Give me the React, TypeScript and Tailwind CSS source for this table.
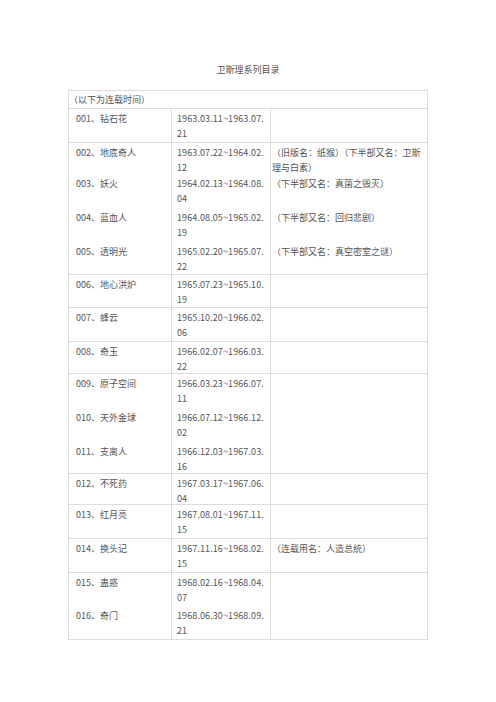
const rows = [
  { name: "001、钻石花", date: ["1963.03.11~1963.07.", "21"], note: [], h: "h-[34px]", line: true },
  { name: "002、地底奇人", date: ["1963.07.22~1964.02.", "12"], note: ["（旧版名：纸猴）（下半部又名：卫斯", "理与白素）"], h: "h-[31px]", line: false },
  { name: "003、妖火", date: ["1964.02.13~1964.08.", "04"], note: ["（下半部又名：真菌之毁灭）"], h: "h-[34px]", line: false },
  { name: "004、蓝血人", date: ["1964.08.05~1965.02.", "19"], note: ["（下半部又名：回归悲剧）"], h: "h-[34px]", line: false },
  { name: "005、透明光", date: ["1965.02.20~1965.07.", "22"], note: ["（下半部又名：真空密室之谜）"], h: "h-[33px]", line: true },
  { name: "006、地心洪炉", date: ["1965.07.23~1965.10.", "19"], note: [], h: "h-[33px]", line: true },
  { name: "007、蜂云", date: ["1965.10.20~1966.02.", "06"], note: [], h: "h-[34px]", line: true },
  { name: "008、奇玉", date: ["1966.02.07~1966.03.", "22"], note: [], h: "h-[32px]", line: true },
  { name: "009、原子空间", date: ["1966.03.23~1966.07.", "11"], note: [], h: "h-[34px]", line: false },
  { name: "010、天外金球", date: ["1966.07.12~1966.12.", "02"], note: [], h: "h-[34px]", line: false },
  { name: "011、支离人", date: ["1966.12.03~1967.03.", "16"], note: [], h: "h-[32px]", line: true },
  { name: "012、不死药", date: ["1967.03.17~1967.06.", "04"], note: [], h: "h-[31px]", line: true },
  { name: "013、红月亮", date: ["1967.08.01~1967.11.", "15"], note: [], h: "h-[34px]", line: true },
  { name: "014、换头记", date: ["1967.11.16~1968.02.", "15"], note: ["（连载用名：人造总统）"], h: "h-[34px]", line: true },
  { name: "015、蛊惑", date: ["1968.02.16~1968.04.", "07"], note: [], h: "h-[33px]", line: false },
  { name: "016、奇门", date: ["1968.06.30~1968.09.", "21"], note: [], h: "h-[33px]", line: false },
];

export default function App() {
  return (
    <div className="w-[496px] h-[702px] bg-white text-[9px] text-[#555] font-['Noto_Sans_CJK_SC','Noto_Sans',sans-serif]">
      <p className="pt-[64px] text-center leading-[12px]">卫斯理系列目录</p>

      <div className="ml-[68px] mt-[14px] w-[360px] border border-[#dcdcdc]">
        <div className="h-[18px] flex items-center border-b border-[#dcdcdc] leading-[12px]">
          （以下为连载时间）
        </div>

        {rows.map((r) => (
          <div
            key={r.name}
            className={`flex ${r.h} leading-[15px] ${r.line ? "border-b border-[#dcdcdc]" : ""}`}
          >
            <div className="w-[103px] shrink-0 border-r border-[#dcdcdc] pl-[7px] pt-[2px] whitespace-nowrap">
              {r.name}
            </div>
            <div className="w-[99px] shrink-0 border-r border-[#dcdcdc] pl-[5px] pt-[2px] whitespace-nowrap tracking-[0.1px]">
              {r.date[0]}
              <br />
              {r.date[1]}
            </div>
            <div className="flex-1 pl-[1px] pt-[2px] whitespace-nowrap">
              {r.note.map((n, i) => (
                <div key={i}>{n}</div>
              ))}
            </div>
          </div>
        ))}
      </div>
    </div>
  );
}
